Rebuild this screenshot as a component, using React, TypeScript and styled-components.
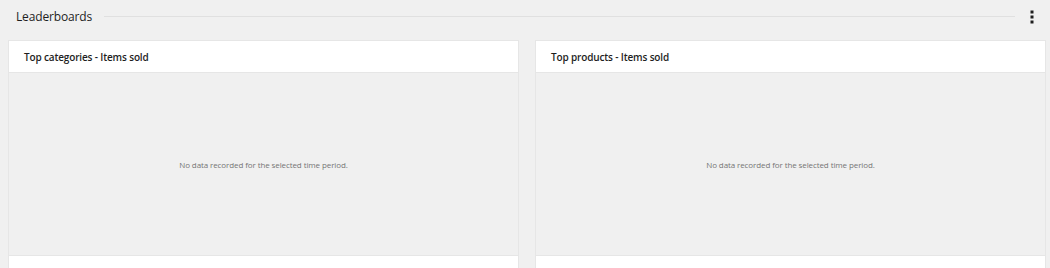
import React from "react";
import styled, { createGlobalStyle } from "styled-components";

const Global = createGlobalStyle`
  html, body { margin: 0; padding: 0; background: #f0f0f0; }
  body { font-family: "Open Sans", "Noto Sans", sans-serif; overflow: hidden; }
`;

const Page = styled.div`
  width: 1050px;
  height: 268px;
  overflow: hidden;
  box-sizing: border-box;
  padding: 0 4px 0 8px;
`;

const Header = styled.div`
  display: flex;
  align-items: center;
  height: 33px;
  padding: 0 11px 0 8px;
  gap: 12px;
`;

const Title = styled.h2`
  margin: 0;
  font-size: 12px;
  font-weight: 400;
  color: #1e1e1e;
  letter-spacing: -0.15px;
`;

const Rule = styled.div`
  flex: 1;
  height: 1px;
  background: #e0e0e0;
  margin-right: 2px;
`;

const MenuButton = styled.button`
  border: 0;
  background: transparent;
  padding: 0;
  width: 6px;
  height: 20px;
  display: flex;
  align-items: center;
  justify-content: center;
  cursor: pointer;
`;

const Grid = styled.div`
  display: grid;
  grid-template-columns: 511px 511px;
  gap: 16px;
  margin-top: 7px;
`;

const Card = styled.section`
  background: #fff;
  border: 1px solid #e6e6e6;
  height: 240px;
  display: flex;
  flex-direction: column;
`;

const CardHeader = styled.div`
  height: 31px;
  display: flex;
  align-items: center;
  padding: 0 15px;
  border-bottom: 1px solid #e6e6e6;
`;

const CardTitle = styled.h3`
  margin: 0;
  font-size: 10px;
  font-weight: 600;
  color: #1e1e1e;
  letter-spacing: -0.15px;
`;

const CardBody = styled.div`
  height: 182px;
  background: #f0f0f0;
  display: flex;
  align-items: center;
  justify-content: center;
  border-bottom: 1px solid #e6e6e6;
`;

const Empty = styled.p`
  margin: 0;
  font-size: 8px;
  color: #757575;
  letter-spacing: -0.1px;
`;

const cards = ["Top categories - Items sold", "Top products - Items sold"];

export default function App() {
  return (
    <>
      <Global />
      <Page>
        <Header>
          <Title>Leaderboards</Title>
          <Rule />
          <MenuButton aria-label="More options">
            <svg width="4" height="14" viewBox="0 0 4 14">
              <rect x="0.5" y="0.5" width="3" height="3" fill="#1e1e1e" />
              <rect x="0.5" y="5.5" width="3" height="3" fill="#1e1e1e" />
              <rect x="0.5" y="10.5" width="3" height="3" fill="#1e1e1e" />
            </svg>
          </MenuButton>
        </Header>
        <Grid>
          {cards.map((c) => (
            <Card key={c}>
              <CardHeader>
                <CardTitle>{c}</CardTitle>
              </CardHeader>
              <CardBody>
                <Empty>No data recorded for the selected time period.</Empty>
              </CardBody>
            </Card>
          ))}
        </Grid>
      </Page>
    </>
  );
}
